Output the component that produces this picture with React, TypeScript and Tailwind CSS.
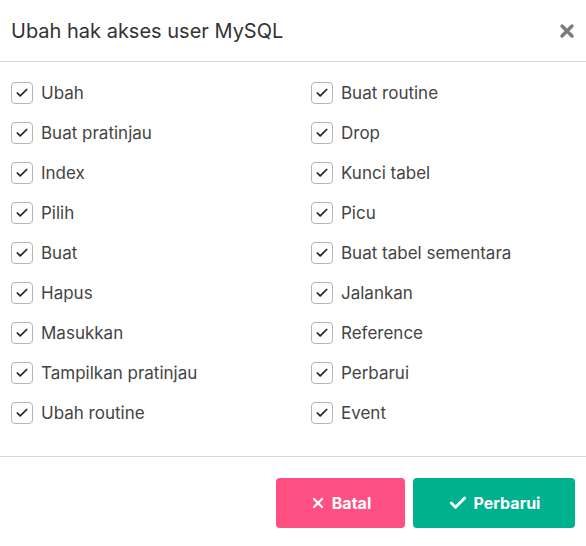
import { Check, X } from "lucide-react";

const left = [
  "Ubah",
  "Buat pratinjau",
  "Index",
  "Pilih",
  "Buat",
  "Hapus",
  "Masukkan",
  "Tampilkan pratinjau",
  "Ubah routine",
];

const right = [
  "Buat routine",
  "Drop",
  "Kunci tabel",
  "Picu",
  "Buat tabel sementara",
  "Jalankan",
  "Reference",
  "Perbarui",
  "Event",
];

function Item({ label }: { label: string }) {
  return (
    <label className="flex h-10 items-center gap-2">
      <span className="flex h-[22px] w-[22px] items-center justify-center rounded border border-[#b5b5b5] bg-white">
        <Check className="h-[14px] w-[14px] text-[#222]" strokeWidth={3} />
      </span>
      <span className="pt-px text-[17px] text-[#444]">{label}</span>
    </label>
  );
}

export default function App() {
  return (
    <div className="h-[546px] w-[586px] bg-white font-['Inter',sans-serif]">
      {/* Header */}
      <div className="flex h-[62px] items-center justify-between border-b border-[#d9d9d9] pl-[11px] pr-[9px]">
        <h2 className="text-[20px] text-[#333]">Ubah hak akses user MySQL</h2>
        <X className="h-5 w-5 text-[#7a7a7a]" strokeWidth={4} />
      </div>

      {/* Body */}
      <div className="grid grid-cols-[300px_1fr] border-b border-[#d9d9d9] pb-[23px] pl-[11px] pt-[11px]">
        <div className="flex flex-col">
          {left.map((l) => (
            <Item key={l} label={l} />
          ))}
        </div>
        <div className="flex flex-col">
          {right.map((l) => (
            <Item key={l} label={l} />
          ))}
        </div>
      </div>

      {/* Footer */}
      <div className="flex justify-end gap-2 pr-[11px] pt-[21px]">
        <button className="flex h-[50px] w-[129px] items-center justify-center gap-1.5 rounded bg-[#fe5083] text-base font-bold text-white">
          <X className="h-4 w-4" strokeWidth={3.5} />
          Batal
        </button>
        <button className="flex h-[50px] w-[162px] items-center justify-center gap-1.5 rounded bg-[#00b190] text-base font-bold text-white">
          <Check className="h-5 w-5" strokeWidth={3.5} />
          Perbarui
        </button>
      </div>
    </div>
  );
}
